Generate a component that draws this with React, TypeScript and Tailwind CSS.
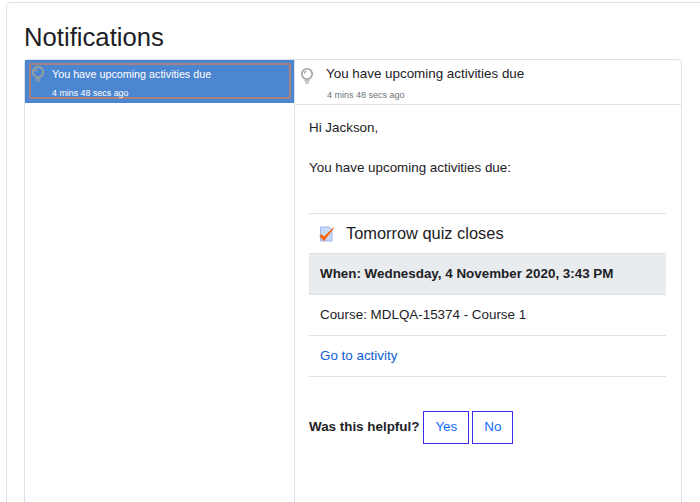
function Bulb({ color, className }: { color: string; className?: string }) {
  return (
    <svg viewBox="0 0 14 16" width="14" height="16" className={className} fill="none" stroke={color}>
      <circle cx="7" cy="6" r="5.2" strokeWidth="1.6" />
      <path d="M4.2 5.6a2.9 2.9 0 0 1 2.3-2.5" strokeWidth="1.1" />
      <path d="M4.5 12.8h5M5 15h4" strokeWidth="1.2" />
    </svg>
  );
}

function Check() {
  return (
    <svg viewBox="0 0 16 16" width="16" height="16" className="mt-[1px]">
      <path d="M1.5 1h8.5l3 3v11h-11.500z" fill="#c9d8f5" stroke="#9db4ee" />
      <path d="M0.800 9.800l4 4.900 9.700-12.700-9.500 9-2.500-2.200z" fill="#f5660f" stroke="#f5660f" strokeWidth="1" strokeLinejoin="round" />
    </svg>
  );
}

export default function App() {
  return (
    <div className="h-[502px] w-[700px] overflow-hidden bg-white pl-[6px] pt-[2px] font-['Liberation_Sans',sans-serif] text-[13.4px] text-[#1d2125]">
      <div className="h-[520px] w-[720px] rounded-[4px] border border-[#dee2e6] pl-[17px] pt-[16px]">
        <h2 className="mb-[4px] text-[25.7px] leading-[36px] text-[#1d2125]">Notifications</h2>
        <div className="flex h-[460px] w-[658px] rounded-[4px] border border-[#dee2e6]">
          <div className="w-[270px] shrink-0 border-r border-[#dee2e6]">
            <div className="h-[43px] bg-[#4c86d1] pl-[4px] pr-[3px] pt-[3px] text-white">
              <div className="flex h-[36px] rounded-[2px] border-2 border-[#a8817f] pl-[21px]">
                <Bulb color="#a3a596" className="absolute ml-[-21px] mt-[1px]" />
                <div className="flex flex-col">
                  <span className="mt-[2px] text-[10.75px] leading-[14px]">You have upcoming activities due</span>
                  <span className="mt-[7px] text-[8.9px] leading-[11px]">4 mins 48 secs ago</span>
                </div>
              </div>
            </div>
          </div>
          <div className="min-w-0 flex-1">
            <div className="flex h-[45px] border-b border-[#dee2e6] pl-[5px]">
              <Bulb color="#a0a0a0" className="mt-[8px]" />
              <div className="ml-[12px] flex flex-col">
                <span className="mt-[6px] text-[13.4px] leading-[16px]">You have upcoming activities due</span>
                <span className="ml-[1px] mt-[8px] text-[9px] leading-[11px] text-[#6a737b]">4 mins 48 secs ago</span>
              </div>
            </div>
            <div className="pl-[14px] pr-[15px]">
              <p className="mt-[15px] leading-[16px]">Hi Jackson,</p>
              <p className="mt-[24px] leading-[16px]">You have upcoming activities due:</p>
              <div className="mt-[37px] border-t border-[#dee2e6]">
                <div className="flex h-[39px] items-center pl-[10px]">
                  <Check />
                  <span className="ml-[11px] text-[16.4px]">Tomorrow quiz closes</span>
                </div>
                <div className="flex h-[42px] items-center border-y border-[#dee2e6] bg-[#e9ecef] pl-[11px] font-bold">
                  When: Wednesday, 4 November 2020, 3:43 PM
                </div>
                <div className="flex h-[41px] items-center border-b border-[#dee2e6] pl-[11px]">
                  Course: MDLQA-15374 - Course 1
                </div>
                <div className="flex h-[41px] items-center border-b border-[#dee2e6] pl-[11px]">
                  <a className="text-[#0f5fd0]">Go to activity</a>
                </div>
              </div>
              <div className="mt-[34px] flex items-center">
                <span className="font-bold">Was this helpful?</span>
                <button className="ml-[4px] h-[33px] w-[46px] border border-[#3a2cf0] text-[#0f6cff]">Yes</button>
                <button className="ml-[3px] h-[33px] w-[41px] border border-[#3a2cf0] text-[#0f6cff]">No</button>
              </div>
            </div>
          </div>
        </div>
      </div>
    </div>
  );
}
